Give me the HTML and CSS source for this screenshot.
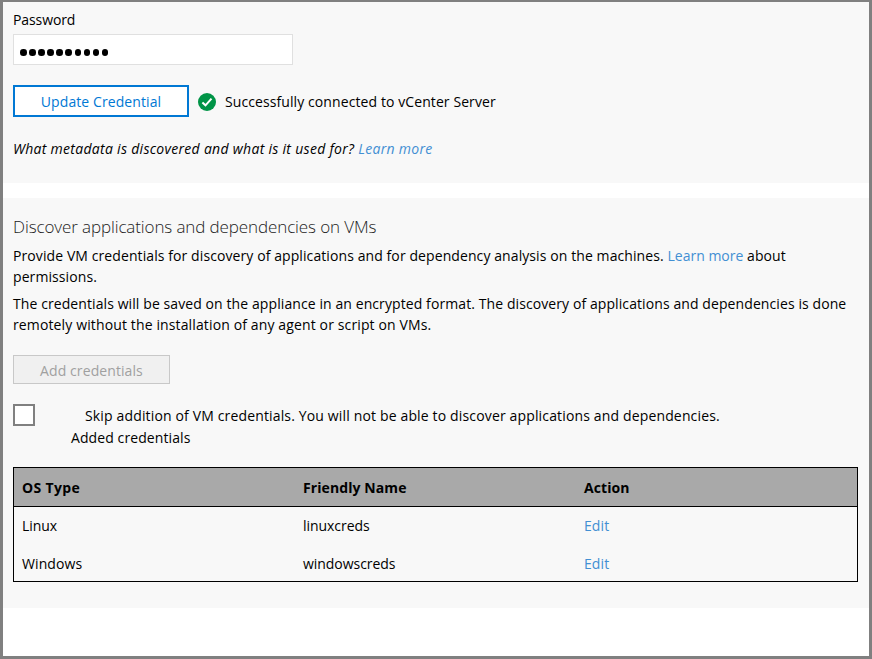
FILE: index.html
```
<!DOCTYPE html>
<html lang="en">
<head>
<meta charset="utf-8">
<title>Credentials</title>
<link rel="stylesheet" href="styles.css">
</head>
<body>
<main class="frame">
  <section class="panel panel-connect">
    <div class="field-label">Password</div>
    <div class="password-box"><i></i><i></i><i></i><i></i><i></i><i></i><i></i><i></i><i></i><i></i></div>
    <div class="connect-row">
      <button class="btn-update">Update Credential</button>
      <svg class="check" viewBox="0 0 18 18"><circle cx="9" cy="9" r="9" fill="#009447"/><path d="M4.4 9.4 7.5 12.3 13.5 5.7" fill="none" stroke="#fff" stroke-width="2"/></svg>
      <span>Successfully connected to vCenter Server</span>
    </div>
    <p class="metadata">What metadata is discovered and what is it used for? <a>Learn more</a></p>
  </section>
  <section class="panel panel-discover">
    <h2>Discover applications and dependencies on VMs</h2>
    <p class="copy">Provide VM credentials for discovery of applications and for dependency analysis on the machines. <a>Learn more</a> about<br>permissions.</p>
    <p class="copy">The credentials will be saved on the appliance in an encrypted format. The discovery of applications and dependencies is done<br><span class="wide">remotely without the installation of any agent or script on VMs.</span></p>
    <button class="btn-add" disabled>Add credentials</button>
    <div class="skip-row">
      <span class="checkbox"></span>
      <div class="skip-text"><span class="skip">Skip addition of VM credentials. You will not be able to discover applications and dependencies.</span><span>Added credentials</span></div>
    </div>
    <div class="table">
      <div class="row head"><span class="os">OS Type</span><span>Friendly Name</span><span>Action</span></div>
      <div class="row"><span class="linux">Linux</span><span class="creds">linuxcreds</span><a>Edit</a></div>
      <div class="row"><span>Windows</span><span class="creds">windowscreds</span><a>Edit</a></div>
    </div>
  </section>
</main>
</body>
</html>
```

FILE: styles.css
```
* { box-sizing: border-box; }
body {
  margin: 0;
  font: 14px/21px "Open Sans", "Noto Sans", sans-serif;
  letter-spacing: 0.09px;
  color: #000;
}
.frame {
  width: 872px;
  height: 659px;
  border: 3px solid #808080;
  border-top-width: 2px;
  background: #fff;
  display: flex;
  flex-direction: column;
  overflow: hidden;
}
.panel { background: #f8f8f8; padding: 0 10px; flex: none; }
.panel-connect { height: 181px; margin-bottom: 15px; padding-top: 7px; }
.panel-discover { height: 410px; padding-top: 17px; }
a { color: #428fd3; }
.copy a { letter-spacing: 0; }
p, h2 { margin: 0; white-space: nowrap; }
.field-label { height: 25px; letter-spacing: -0.1px; }
.password-box {
  width: 280px;
  height: 31px;
  border: 1px solid #e0e0e0;
  background: #fff;
  display: flex;
  gap: 2.6px;
  padding: 14px 0 0 6px;
}
.password-box i { width: 6.5px; height: 6.5px; border-radius: 50%; background: #000; }
.connect-row { display: flex; align-items: center; height: 32px; margin-top: 20px; }
button { font: inherit; letter-spacing: inherit; padding: 0; }
.btn-update { width: 176px; height: 32px; border: 2px solid #0078d4; background: #fff; color: #0078d4; }
.check { width: 18px; height: 18px; margin: 1px 9px 0; }
.metadata { font-style: italic; letter-spacing: 0.29px; margin-top: 21px; }
h2 { font-size: 17px; font-weight: 300; line-height: 24px; letter-spacing: -0.11px; color: #222; }
.copy { margin-top: 6px; }
.wide { letter-spacing: 0.13px; }
.btn-add { display: block; width: 157px; height: 29px; margin-top: 20px; padding-top: 2px; border: 1px solid #c8c8c8; background: #f0f0f0; color: #a0a0a0; }
.skip-row { display: flex; margin-top: 20px; height: 63px; }
.checkbox { width: 22px; height: 22px; border: 2px solid #808080; background: #fff; }
.skip-text { display: flex; flex-direction: column; align-items: flex-start; line-height: 22px; margin: 1px 0 0 36px; }
.skip { margin-left: 14px; white-space: nowrap; letter-spacing: 0.15px; }
.table { width: 845px; height: 115px; border: 1px solid #000; }
.row { display: grid; grid-template-columns: 281px 281px 1fr; padding-left: 8px; height: 38px; line-height: 38px; }
.head { height: 39px; background: #a9a9a9; border-bottom: 1px solid #000; line-height: 39px; font-weight: 700; }
.os { letter-spacing: 0.35px; }
.linux, .creds { letter-spacing: -0.05px; }
```
